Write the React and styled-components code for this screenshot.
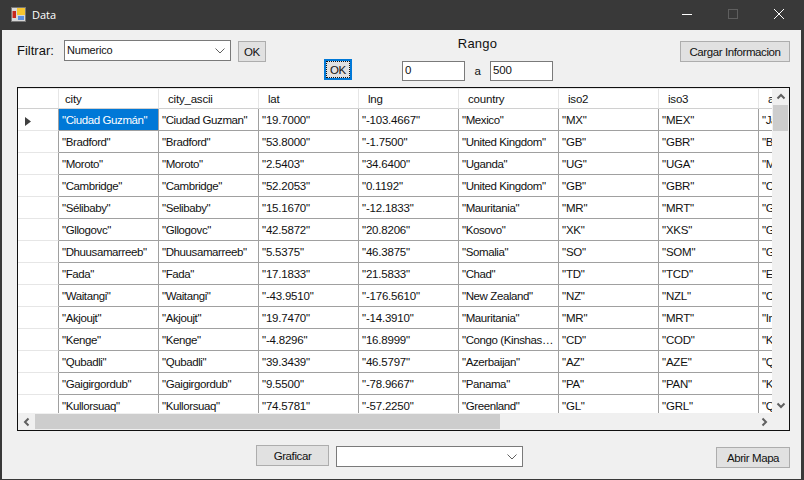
import styled, { createGlobalStyle } from "styled-components";

const columns = ["city", "city_ascii", "lat", "lng", "country", "iso2", "iso3", "admin_name"];
const wordColumns = [0, 1, 4, 7];

const rows = [
  ["Ciudad Guzmán", "Ciudad Guzman", "19.7000", "-103.4667", "Mexico", "MX", "MEX", "Jalisco"],
  ["Bradford", "Bradford", "53.8000", "-1.7500", "United Kingdom", "GB", "GBR", "Bradford"],
  ["Moroto", "Moroto", "2.5403", "34.6400", "Uganda", "UG", "UGA", "Moroto"],
  ["Cambridge", "Cambridge", "52.2053", "0.1192", "United Kingdom", "GB", "GBR", "Cambridgeshire"],
  ["Sélibaby", "Selibaby", "15.1670", "-12.1833", "Mauritania", "MR", "MRT", "Guidimaka"],
  ["Gllogovc", "Gllogovc", "42.5872", "20.8206", "Kosovo", "XK", "XKS", "Gllogovc"],
  ["Dhuusamarreeb", "Dhuusamarreeb", "5.5375", "46.3875", "Somalia", "SO", "SOM", "Galguduud"],
  ["Fada", "Fada", "17.1833", "21.5833", "Chad", "TD", "TCD", "Ennedi-Est"],
  ["Waitangi", "Waitangi", "-43.9510", "-176.5610", "New Zealand", "NZ", "NZL", "Chatham Islands"],
  ["Akjoujt", "Akjoujt", "19.7470", "-14.3910", "Mauritania", "MR", "MRT", "Inchiri"],
  ["Kenge", "Kenge", "-4.8296", "16.8999", "Congo (Kinshasa)", "CD", "COD", "Kwango"],
  ["Qubadli", "Qubadli", "39.3439", "46.5797", "Azerbaijan", "AZ", "AZE", "Qubadli"],
  ["Gaigirgordub", "Gaigirgordub", "9.5500", "-78.9667", "Panama", "PA", "PAN", "Kuna Yala"],
  ["Kullorsuaq", "Kullorsuaq", "74.5781", "-57.2250", "Greenland", "GL", "GRL", "Qaasuitsup"],
];

export default function App() {
  return (
    <>
      <GlobalStyle />
      <Frame>
        <TitleBar>
          <svg width="16" height="16" viewBox="0 0 16 16">
            <rect x="0.5" y="0.5" width="14" height="14" fill="#d8d8d8" stroke="#777" />
            <rect x="6" y="1" width="8" height="7" fill="#f6c530" />
            <rect x="1.5" y="4" width="3.5" height="7" fill="#c8281e" />
            <rect x="7" y="9" width="6" height="4" fill="#5a8fe0" />
          </svg>
          <WindowTitle>Data</WindowTitle>
          <WindowControls>
            <svg width="12" height="12" viewBox="0 0 12 12">
              <path d="M1 6.5h10" stroke="#fff" strokeWidth="1" />
            </svg>
            <svg width="12" height="12" viewBox="0 0 12 12">
              <rect x="1.5" y="1.5" width="9" height="9" fill="none" stroke="#5f5f5f" />
            </svg>
            <svg width="12" height="12" viewBox="0 0 12 12">
              <path d="M1 1l10 10M11 1L1 11" stroke="#fff" strokeWidth="1" />
            </svg>
          </WindowControls>
        </TitleBar>

        <Panel>
          <Toolbar>
            <FilterGroup>
              <FilterLabel>Filtrar:</FilterLabel>
              <ComboBox $width={167}>
                <span>Numerico</span>
                <ComboArrow />
              </ComboBox>
              <OkButton>OK</OkButton>
            </FilterGroup>
            <RangeGroup>
              <FocusedButton>
                <span>OK</span>
              </FocusedButton>
              <RangeBox>
                <RangeTitle>Rango</RangeTitle>
                <RangeInputs>
                  <TextBox $width={63}>0</TextBox>
                  <RangeSep>a</RangeSep>
                  <TextBox $width={63}>500</TextBox>
                </RangeInputs>
              </RangeBox>
            </RangeGroup>
            <LoadButton>Cargar Informacion</LoadButton>
          </Toolbar>

          <GridBox>
            <GridArea>
              <HeaderRow>
                <HeaderCorner />
                {columns.map((c, i) => (
                  <HeaderCell key={c} $first={i === 0}>
                    {c}
                  </HeaderCell>
                ))}
              </HeaderRow>
              {rows.map((r, i) => (
                <Row key={r[0]}>
                  <RowHead>
                    {i === 0 && (
                      <svg width="6" height="9" viewBox="0 0 6 9">
                        <path d="M0 0l6 4.5L0 9z" fill="#404040" />
                      </svg>
                    )}
                  </RowHead>
                  {r.map((v, j) => (
                    <Cell key={j} $selected={i === 0 && j === 0} $word={wordColumns.includes(j)}>
                      "{v}"
                    </Cell>
                  ))}
                </Row>
              ))}
            </GridArea>
            <VScroll>
              <ScrollArrow>
                <Chevron d="M1.5 6.5L5 3l3.5 3.5" />
              </ScrollArrow>
              <VThumb />
              <VTrack />
              <ScrollArrow>
                <Chevron d="M1.5 3.5L5 7l3.5-3.5" />
              </ScrollArrow>
            </VScroll>
            <HScroll>
              <ScrollArrow>
                <Chevron d="M6.5 1.5L3 5l3.5 3.5" />
              </ScrollArrow>
              <HThumb />
              <VTrack />
              <ScrollArrow>
                <Chevron d="M3.5 1.5L7 5 3.5 8.5" />
              </ScrollArrow>
            </HScroll>
            <ScrollCorner />
          </GridBox>

          <Footer>
            <PlotButton>Graficar</PlotButton>
            <FooterCombo $width={187} />
            <MapButton>Abrir Mapa</MapButton>
          </Footer>
        </Panel>
      </Frame>
    </>
  );
}

function Chevron({ d }) {
  return (
    <svg width="10" height="10" viewBox="0 0 10 10">
      <path d={d} fill="none" stroke="#606060" strokeWidth="2" />
    </svg>
  );
}

function ComboArrow() {
  return (
    <ArrowSvg width="10" height="6" viewBox="0 0 10 6">
      <path d="M0.5 0.5L5 5l4.5-4.5" fill="none" stroke="#606060" strokeWidth="1" />
    </ArrowSvg>
  );
}

const GlobalStyle = createGlobalStyle`
  html, body {
    margin: 0;
    padding: 0;
    background: #393939;
  }
  * {
    box-sizing: border-box;
  }
  body {
    font-family: "Liberation Sans", Arial, sans-serif;
    font-size: 11.5px;
    letter-spacing: -0.2px;
    color: #111;
  }
`;

const Frame = styled.div`
  display: flex;
  flex-direction: column;
  width: 804px;
  height: 480px;
  overflow: hidden;
  background: #393939;
  padding: 0 3px 1px 2px;
`;

const TitleBar = styled.div`
  display: flex;
  align-items: center;
  flex: 0 0 30px;
  padding-left: 9px;
`;

const WindowTitle = styled.span`
  margin: 0 0 2px 5px;
  font-family: "Open Sans", sans-serif;
  font-size: 11px;
  letter-spacing: 0;
  color: #fff;
`;

const WindowControls = styled.div`
  display: flex;
  align-items: center;
  gap: 34px;
  margin: 0 0 2px auto;
  padding-right: 16px;
`;

const Panel = styled.div`
  display: flex;
  flex-direction: column;
  flex: 1;
  background: #f0f0f0;
  padding: 0 11px 0 15px;
`;

const Toolbar = styled.div`
  display: flex;
  flex: 0 0 57px;
`;

const FilterGroup = styled.div`
  display: flex;
  align-items: flex-start;
  padding-top: 10px;
`;

const FilterLabel = styled.span`
  width: 47px;
  margin-top: 3px;
  font-size: 13px;
  letter-spacing: 0;
`;

const ComboBox = styled.div`
  display: flex;
  align-items: center;
  justify-content: space-between;
  width: ${(props) => props.$width}px;
  height: 21px;
  padding: 0 5px 2px 2px;
  background: #fff;
  border: 1px solid #7a7a7a;
  font-size: 11px;
`;

const ArrowSvg = styled.svg`
  margin-top: 2px;
`;

const Button = styled.div`
  display: flex;
  align-items: center;
  justify-content: center;
  height: 21px;
  background: #e1e1e1;
  border: 1px solid #adadad;
  letter-spacing: -0.4px;
`;

const OkButton = styled(Button)`
  width: 28px;
  margin: 1px 0 0 7px;
`;

const RangeGroup = styled.div`
  display: flex;
  align-items: flex-end;
  gap: 50px;
  margin-left: 58px;
  padding-bottom: 6px;
`;

const FocusedButton = styled(Button)`
  width: 28px;
  margin-bottom: 1px;
  border: 2px solid #0078d7;

  span {
    display: flex;
    align-items: center;
    justify-content: center;
    width: 100%;
    height: 100%;
    border: 1px dotted #111;
  }
`;

const RangeBox = styled.div`
  display: flex;
  flex-direction: column;
  align-items: center;
`;

const RangeTitle = styled.span`
  margin-bottom: 10px;
  font-size: 13px;
  line-height: 15px;
  letter-spacing: 0.2px;
`;

const RangeInputs = styled.div`
  display: flex;
  align-items: center;
`;

const TextBox = styled.div`
  width: ${(props) => props.$width}px;
  height: 20px;
  padding: 2px 2px 0;
  background: #fff;
  border: 1px solid #7a7a7a;
`;

const RangeSep = styled.span`
  width: 25px;
  text-align: center;
`;

const LoadButton = styled(Button)`
  width: 110px;
  margin: 11px 0 0 auto;
`;

const GridBox = styled.div`
  display: grid;
  grid-template-columns: 754px 17px;
  grid-template-rows: 325px 17px;
  width: 773px;
  height: 344px;
  background: #f0f0f0;
  border: 1px solid #101010;
`;

const GridArea = styled.div`
  overflow: hidden;
  background: #fff;
`;

const HeaderRow = styled.div`
  display: flex;
  width: max-content;
  height: 21px;
`;

const HeaderCorner = styled.div`
  flex: 0 0 41px;
  border-top: 1px solid #e6e6e6;
  border-right: 1px solid #e6e6e6;
  border-bottom: 1px solid #d0d0d0;
`;

const HeaderCell = styled.div`
  flex: 0 0 100px;
  padding: 3px 0 0 ${(props) => (props.$first ? 6 : 9)}px;
  border-top: 1px solid #e6e6e6;
  border-right: 1px solid #e6e6e6;
  border-bottom: 1px solid #d0d0d0;
  line-height: 14px;
`;

const Row = styled.div`
  display: flex;
  width: max-content;
  height: 22px;
`;

const RowHead = styled.div`
  display: flex;
  align-items: center;
  flex: 0 0 41px;
  padding: 4px 0 0 7px;
  border-right: 1px solid #a0a0a0;
  border-bottom: 1px solid #e6e6e6;
`;

const Cell = styled.div`
  flex: 0 0 100px;
  padding: 4px 4px 0 3px;
  overflow: hidden;
  white-space: nowrap;
  text-overflow: ellipsis;
  letter-spacing: ${(props) => (props.$word ? "-0.4px" : "-0.2px")};
  background: ${(props) => (props.$selected ? "#0078d7" : "#fff")};
  color: ${(props) => (props.$selected ? "#fff" : "#111")};
  border-right: 1px solid #a0a0a0;
  border-bottom: 1px solid #a0a0a0;
  line-height: 15px;
`;

const VScroll = styled.div`
  display: flex;
  flex-direction: column;
  align-items: center;
`;

const HScroll = styled.div`
  display: flex;
  align-items: center;
`;

const ScrollArrow = styled.div`
  display: flex;
  align-items: center;
  justify-content: center;
  flex: 0 0 17px;
  width: 17px;
  height: 17px;
`;

const VThumb = styled.div`
  flex: 0 0 26px;
  width: 15px;
  background: #cdcdcd;
`;

const HThumb = styled.div`
  flex: 0 0 465px;
  height: 15px;
  background: #cdcdcd;
`;

const VTrack = styled.div`
  flex: 1;
`;

const ScrollCorner = styled.div`
  background: #f0f0f0;
`;

const Footer = styled.div`
  display: flex;
  align-items: flex-start;
  flex: 1;
  padding-left: 239px;
`;

const PlotButton = styled(Button)`
  width: 73px;
  margin-top: 14px;
`;

const FooterCombo = styled(ComboBox).attrs({ children: <ComboArrow /> })`
  justify-content: flex-end;
  margin: 15px 0 0 7px;
`;

const MapButton = styled(Button)`
  width: 74px;
  margin: 16px 0 0 auto;
`;
